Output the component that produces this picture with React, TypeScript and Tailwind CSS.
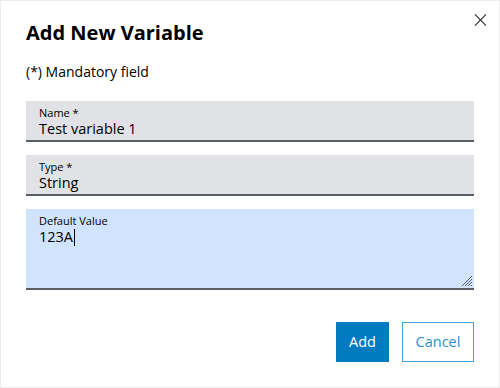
export default function App() {
  return (
    <div className="relative h-[388px] w-[500px] border border-[#ececec] bg-white font-['Open_Sans',sans-serif] text-[#000]">
      <button className="absolute right-[12px] top-[12px] flex h-[13px] w-[13px] items-center justify-center text-[#2e3033]">
        <svg width="14" height="14" viewBox="0 0 14 14" fill="none" stroke="currentColor" strokeWidth="1.3">
          <path d="M1 1L13 13M13 1L1 13" />
        </svg>
      </button>

      <div className="px-[25px] pt-[19px]">
        <h1 className="text-[20px] font-bold leading-[26px]">Add New Variable</h1>
        <p className="mt-[16px] text-[14px] leading-[20px]">(*) Mandatory field</p>

        <div className="mt-[19px] flex flex-col gap-[13px]">
          <div className="h-[41px] border-b-2 border-[#595e62] bg-[#e0e2e5] px-[13px] pt-[5px]">
            <div className="text-[11px] leading-[14px]">Name *</div>
            <div className="text-[14.5px] leading-[18px]">Test variable 1</div>
          </div>
          <div className="h-[41px] border-b-2 border-[#595e62] bg-[#e0e2e5] px-[13px] pt-[5px]">
            <div className="text-[11px] leading-[14px]">Type *</div>
            <div className="text-[14.5px] leading-[18px]">String</div>
          </div>
          <div className="relative h-[81px] border-b-2 border-[#595e62] bg-[#d1e4ff] px-[13px] pt-[5px]">
            <div className="text-[11px] leading-[14px]">Default Value</div>
            <div className="flex items-center text-[14.5px] leading-[18px]">
              123A<span className="ml-[1px] inline-block h-[17px] w-[1px] bg-black" />
            </div>
            <svg className="absolute bottom-[1px] right-[1px]" width="12" height="12" viewBox="0 0 12 12" stroke="#595e62" strokeWidth="1">
              <path d="M1 11L11 1M4 11L11 4M7 11L11 7M10 11L11 10" />
            </svg>
          </div>
        </div>

        <div className="mt-[32px] flex justify-end gap-[13px]">
          <button className="h-[40px] w-[53px] bg-[#007bc0] text-[14.5px] text-white">Add</button>
          <button className="h-[40px] w-[72px] border border-[#4aa3d9] bg-white text-[14.5px] text-[#2a8fce]">Cancel</button>
        </div>
      </div>
    </div>
  );
}
